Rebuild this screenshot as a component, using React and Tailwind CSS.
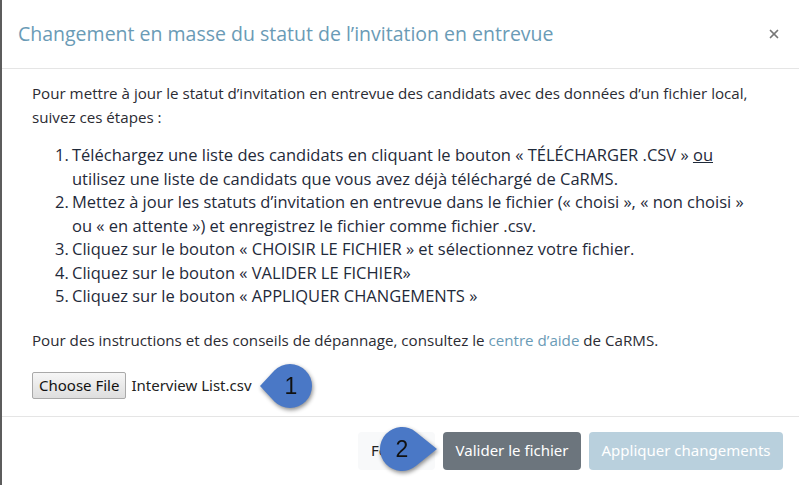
import { X } from 'lucide-react';

const STEPS = [
  <>
    Téléchargez une liste des candidats en cliquant le bouton « TÉLÉCHARGER .CSV » <span className="underline">ou</span>
    <br />
    utilisez une liste de candidats que vous avez déjà téléchargé de CaRMS.
  </>,
  <>
    Mettez à jour les statuts d’invitation en entrevue dans le fichier (« choisi », « non choisi »
    <br />
    ou « en attente ») et enregistrez le fichier comme fichier .csv.
  </>,
  <>Cliquez sur le bouton « CHOISIR LE FICHIER » et sélectionnez votre fichier.</>,
  <>Cliquez sur le bouton « VALIDER LE FICHIER»</>,
  <>Cliquez sur le bouton « APPLIQUER CHANGEMENTS »</>
];

// teardrop markers drawn over the screenshot
const SHAPES = {
  left: { d: 'M3 24 L17.4 8.5 A22 22 0 1 1 17.4 39.5 Z', cx: 34 },
  right: { d: 'M59 24 L37.8 6.9 A22 22 0 1 0 37.8 41.1 Z', cx: 24 }
};

const Callout = ({ label, direction, className }) => {
  const shape = SHAPES[direction];

  return (
    <div className={`absolute h-[50px] w-[62px] ${className}`}>
      <svg width="62" height="50" viewBox="0 0 62 50" className="drop-shadow-[1px_2px_2px_rgba(0,0,0,0.45)]">
        <path d={shape.d} fill="#4a78c6" />
        <text x={shape.cx} y="32" textAnchor="middle" fontSize="23" fontFamily="Liberation Sans, Arial, sans-serif" fill="#111">
          {label}
        </text>
      </svg>
    </div>
  );
};

const App = () => {
  return (
    <div className="relative h-[485px] w-[799px] overflow-hidden border-l-2 border-[#5c5c5c] bg-white font-['Open_Sans',sans-serif] text-[#2b2b33]">
      <div className="flex h-[69px] items-center justify-between border-b border-[#e5e5e5] pl-4 pr-[18px]">
        <h1 className="text-[19.5px] text-[#6a9bb6]">Changement en masse du statut de l’invitation en entrevue</h1>
        <X className="h-[14px] w-[14px] text-[#777]" strokeWidth={3} />
      </div>

      <div className="border-b border-[#e5e5e5] px-[30px] pt-[12px] pb-[17px] text-[15.15px] leading-6">
        <p>
          Pour mettre à jour le statut d’invitation en entrevue des candidats avec des données d’un fichier local, suivez ces
          étapes :
        </p>

        <ol className="mt-[14px] mb-[20px] pl-[23px] text-[16.5px] leading-[23.5px] font-medium text-[#1f2a3a]">
          {STEPS.map((step, index) => (
            <li key={index} className="flex whitespace-nowrap">
              <span className="w-[17px] shrink-0">{index + 1}.</span>
              <span>{step}</span>
            </li>
          ))}
        </ol>

        <p>
          Pour des instructions et des conseils de dépannage, consultez le <span className="text-[#6a9bb6]">centre d’aide</span> de
          CaRMS.
        </p>

        <div className="mt-[20px] flex items-center gap-[5px] font-['Noto_Sans',sans-serif] text-[15px] text-[#222]">
          <button className="h-[27px] rounded-[2px] border border-[#a9a9a9] bg-gradient-to-b from-[#f6f6f6] to-[#dedede] px-[6px] text-[#111]">
            Choose File
          </button>
          <span>Interview List.csv</span>
        </div>
      </div>

      <div className="flex justify-end gap-2 pt-[15px] pr-[16px] font-['Noto_Sans',sans-serif]">
        <button className="h-[38px] w-[77px] rounded bg-[#f8f9fa] text-[15px] text-[#222]">Fermer</button>
        <button className="h-[38px] w-[138px] rounded bg-[#6c757d] text-[15px] text-white">Valider le fichier</button>
        <button className="h-[38px] w-[194px] rounded bg-[#b9d0dd] text-[15px] text-white">Appliquer changements</button>
      </div>

      <Callout label="1" direction="left" className="left-[255px] top-[362px]" />
      <Callout label="2" direction="right" className="left-[376px] top-[425px]" />
    </div>
  );
};

export default App;
